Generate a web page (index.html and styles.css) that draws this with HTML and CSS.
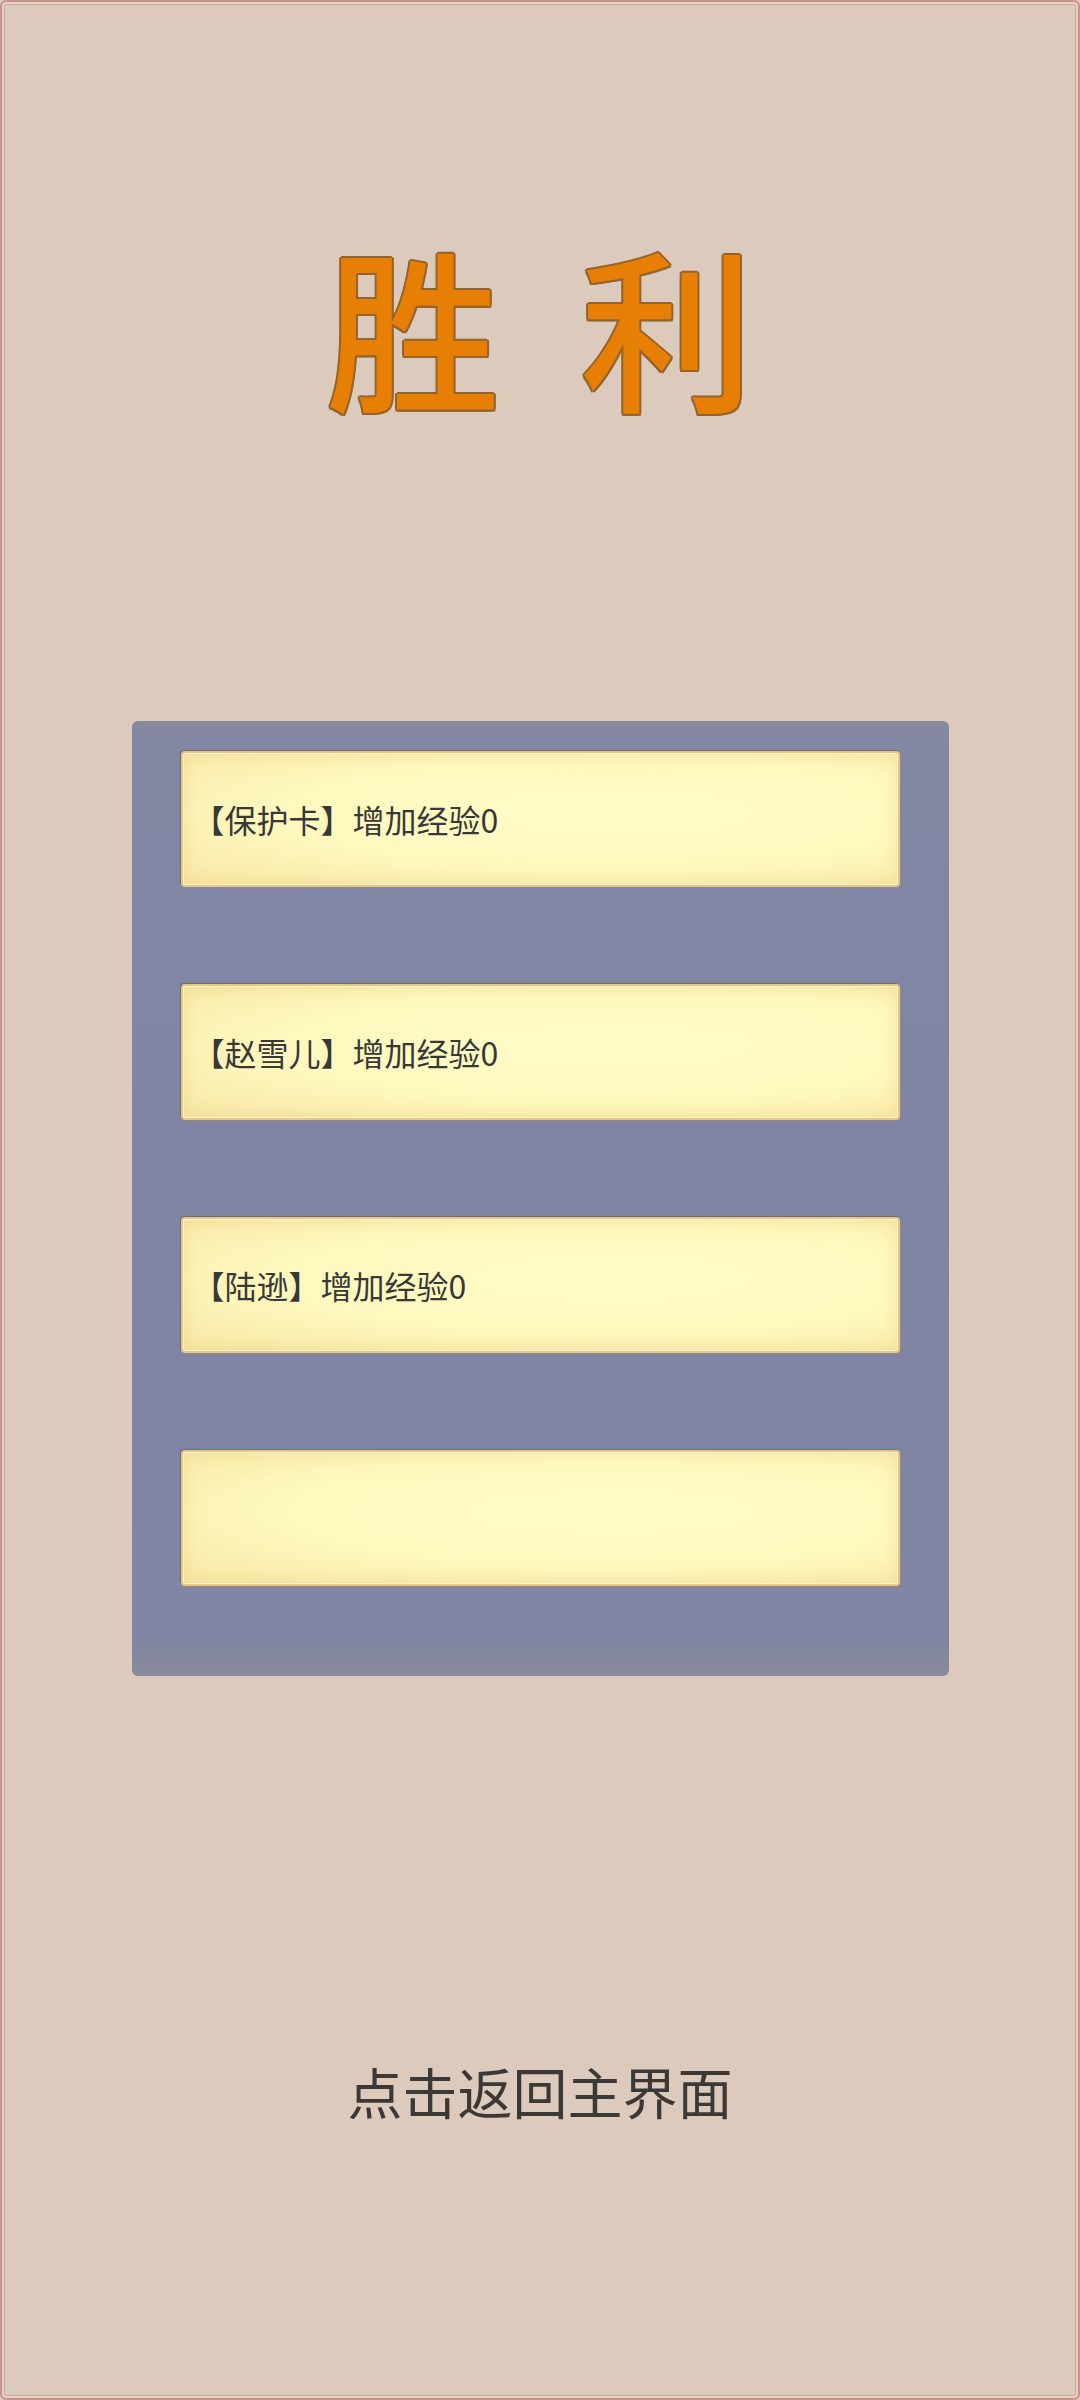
FILE: index.html
```html
<!DOCTYPE html>
<html lang="zh-CN">
<head>
<meta charset="utf-8">
<title>胜利</title>
<link rel="stylesheet" href="styles.css">
</head>
<body>
<div class="screen">
  <h1 class="title"><span>胜</span><span>利</span></h1>
  <div class="panel">
    <div class="card">【保护卡】增加经验0</div>
    <div class="card">【赵雪儿】增加经验0</div>
    <div class="card">【陆逊】增加经验0</div>
    <div class="card"></div>
  </div>
  <div class="back">点击返回主界面</div>
</div>
</body>
</html>
```

FILE: styles.css
```css
html, body {
  margin: 0;
  padding: 0;
}
body {
  width: 1080px;
  height: 2400px;
  background: #dccabc;
  font-family: "Noto Sans CJK SC", "Noto Sans", sans-serif;
}
.screen {
  box-sizing: border-box;
  width: 1080px;
  height: 2400px;
  background: #dccabc;
  border: 2px solid #c9958c;
  border-radius: 6px;
  box-shadow: inset 0 0 0 2px #e3d3c6, inset 0 0 0 3px #d2a9a0;
  display: flex;
  flex-direction: column;
  align-items: center;
}
.title {
  margin: 234px 0 0 0;
  display: flex;
  gap: 80px;
  font-size: 174px;
  line-height: 1;
  font-weight: 500;
  color: #e67f04;
  text-shadow:
    2px 0 0 #94642e, -2px 0 0 #94642e, 0 2px 0 #94642e, 0 -2px 0 #94642e,
    1.5px 1.5px 0 #94642e, -1.5px 1.5px 0 #94642e, 1.5px -1.5px 0 #94642e, -1.5px -1.5px 0 #94642e;
}
.panel {
  box-sizing: border-box;
  margin-top: 311px;
  width: 817px;
  height: 955px;
  padding: 30px 49px 0 49px;
  border-radius: 6px;
  background: linear-gradient(to bottom, #8a8a9b 0px, #8287a4 14px, #7f84a3 50%, #7f85a2 96%, #8a8b9c 100%);
  display: flex;
  flex-direction: column;
  gap: 97px;
}
.card {
  box-sizing: border-box;
  height: 136px;
  display: flex;
  align-items: center;
  padding-left: 10px;
  font-size: 32px;
  color: #383838;
  border: 2px solid #e6c786;
  border-radius: 4px;
  background: radial-gradient(ellipse at 60% 45%, #fffcc6 0%, #fef8be 55%, #f7e7a6 100%);
  box-shadow: -1px -1px 0 #6b6c7c, 1px 1px 0 #8e8a86, inset 0 0 0 1px #fff4c9, inset 0 0 18px rgba(235, 205, 130, 0.55);
}
.back {
  margin-top: 387px;
  font-size: 55px;
  line-height: 1;
  color: #3b3836;
}
```
